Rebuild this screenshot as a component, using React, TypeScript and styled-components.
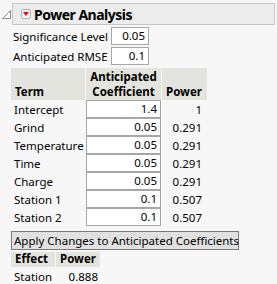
import React from "react";
import styled, { createGlobalStyle } from "styled-components";

const Global = createGlobalStyle`
  html, body { margin: 0; padding: 0; background: #f7f7f7; }
  body { font-family: "Segoe UI", "Noto Sans", "Open Sans", sans-serif; color: #000; }
`;

const Page = styled.div`
  padding: 3px 2px 0 2px;
  width: 273px;
  white-space: nowrap;
`;

const Outline = styled.div`
  display: flex;
  align-items: flex-start;
  gap: 1px;
`;

const Disclosure = styled.svg`
  width: 9px;
  height: 9px;
  margin-top: 7px;
  flex: none;
`;

const TitleBar = styled.div`
  flex: 1;
  height: 20px;
  display: flex;
  align-items: center;
  gap: 3px;
  padding-left: 8px;
  background: #ececec;
  border: 1px solid #c6c6c6;
`;

const RedButton = styled.div`
  width: 10px;
  height: 10px;
  box-sizing: border-box;
  border: 1px solid #b3b3b3;
  background: #f4f4f4;
  border-radius: 2px;
  display: flex;
  align-items: center;
  justify-content: center;
`;

const Title = styled.span`
  font-weight: 700;
  font-size: 14px;
  letter-spacing: -0.5px;
`;

const Body = styled.div`
  padding-left: 9px;
  padding-top: 1px;
`;

const ParamRow = styled.div`
  display: flex;
  align-items: center;
  height: 20px;
  font-size: 11.5px;
`;

const ParamLabel = styled.span`
  width: 98px;
  padding-left: 2px;
`;

const NumBox = styled.div<{ $w?: number }>`
  width: ${(p) => (p.$w ? `${p.$w}px` : "auto")};
  height: 18px;
  box-sizing: border-box;
  background: #fff;
  border: 1px solid #a6a6a6;
  text-align: right;
  padding-right: 3px;
  font-size: 11.5px;
  line-height: 16px;
`;

const Grid = styled.div<{ $cols: string }>`
  display: grid;
  grid-template-columns: ${(p) => p.$cols};
  column-gap: 1px;
  font-size: 11.5px;
`;

const HeadCell = styled.div<{ $center?: boolean; $h: number }>`
  height: ${(p) => p.$h}px;
  box-sizing: border-box;
  background: #e4e4df;
  font-weight: 700;
  display: flex;
  flex-direction: column;
  justify-content: flex-end;
  align-items: ${(p) => (p.$center ? "center" : "flex-start")};
  padding: 0 4px 1px 4px;
  line-height: 15px;
`;

const TermCell = styled.div`
  padding-left: 3px;
  height: 18px;
  line-height: 19px;
`;

const PowerCell = styled.div<{ $pr?: number }>`
  text-align: right;
  padding-right: ${(p) => p.$pr ?? 5}px;
  height: 18px;
  line-height: 19px;
`;

const ApplyButton = styled.div`
  margin-top: 5px;
  width: 228px;
  height: 19px;
  box-sizing: border-box;
  background: #e1e1e1;
  border: 1px solid #7a7a7a;
  font-size: 11.5px;
  line-height: 17px;
  padding-left: 2px;
`;

const EffectWrap = styled.div`
  margin-top: 2px;
`;

const Spacer = styled.div`
  height: 2px;
`;

const rows: [string, string, string][] = [
  ["Intercept", "1.4", "1"],
  ["Grind", "0.05", "0.291"],
  ["Temperature", "0.05", "0.291"],
  ["Time", "0.05", "0.291"],
  ["Charge", "0.05", "0.291"],
  ["Station 1", "0.1", "0.507"],
  ["Station 2", "0.1", "0.507"],
];

export default function App() {
  return (
    <Page>
      <Global />
      <Outline>
        <Disclosure viewBox="0 0 9 9">
          <path d="M8.5 0.5 L8.5 8.5 L0.5 8.5 Z" fill="#fff" stroke="#8a8a8a" strokeWidth="1" />
        </Disclosure>
        <TitleBar>
          <RedButton>
            <svg width="6" height="4" viewBox="0 0 6 4">
              <path d="M0 0 L6 0 L3 4 Z" fill="#e01010" />
            </svg>
          </RedButton>
          <Title>Power Analysis</Title>
        </TitleBar>
      </Outline>
      <Body>
        <ParamRow>
          <ParamLabel>Significance Level</ParamLabel>
          <NumBox $w={38}>0.05</NumBox>
        </ParamRow>
        <ParamRow>
          <ParamLabel>Anticipated RMSE</ParamLabel>
          <NumBox $w={38}>0.1</NumBox>
        </ParamRow>
        <Spacer />
        <Grid $cols="74px 75px 45px">
          <HeadCell $h={32}>Term</HeadCell>
          <HeadCell $h={32} $center>
            <span>Anticipated</span>
            <span>Coefficient</span>
          </HeadCell>
          <HeadCell $h={32}>Power</HeadCell>
          {rows.map(([t, c, p]) => (
            <React.Fragment key={t}>
              <TermCell>{t}</TermCell>
              <NumBox>{c}</NumBox>
              <PowerCell>{p}</PowerCell>
            </React.Fragment>
          ))}
        </Grid>
        <ApplyButton>Apply Changes to Anticipated Coefficients</ApplyButton>
        <EffectWrap>
          <Grid $cols="44px 44px">
            <HeadCell $h={15}>Effect</HeadCell>
            <HeadCell $h={15}>Power</HeadCell>
            <TermCell>Station</TermCell>
            <PowerCell $pr={2}>0.888</PowerCell>
          </Grid>
        </EffectWrap>
      </Body>
    </Page>
  );
}
